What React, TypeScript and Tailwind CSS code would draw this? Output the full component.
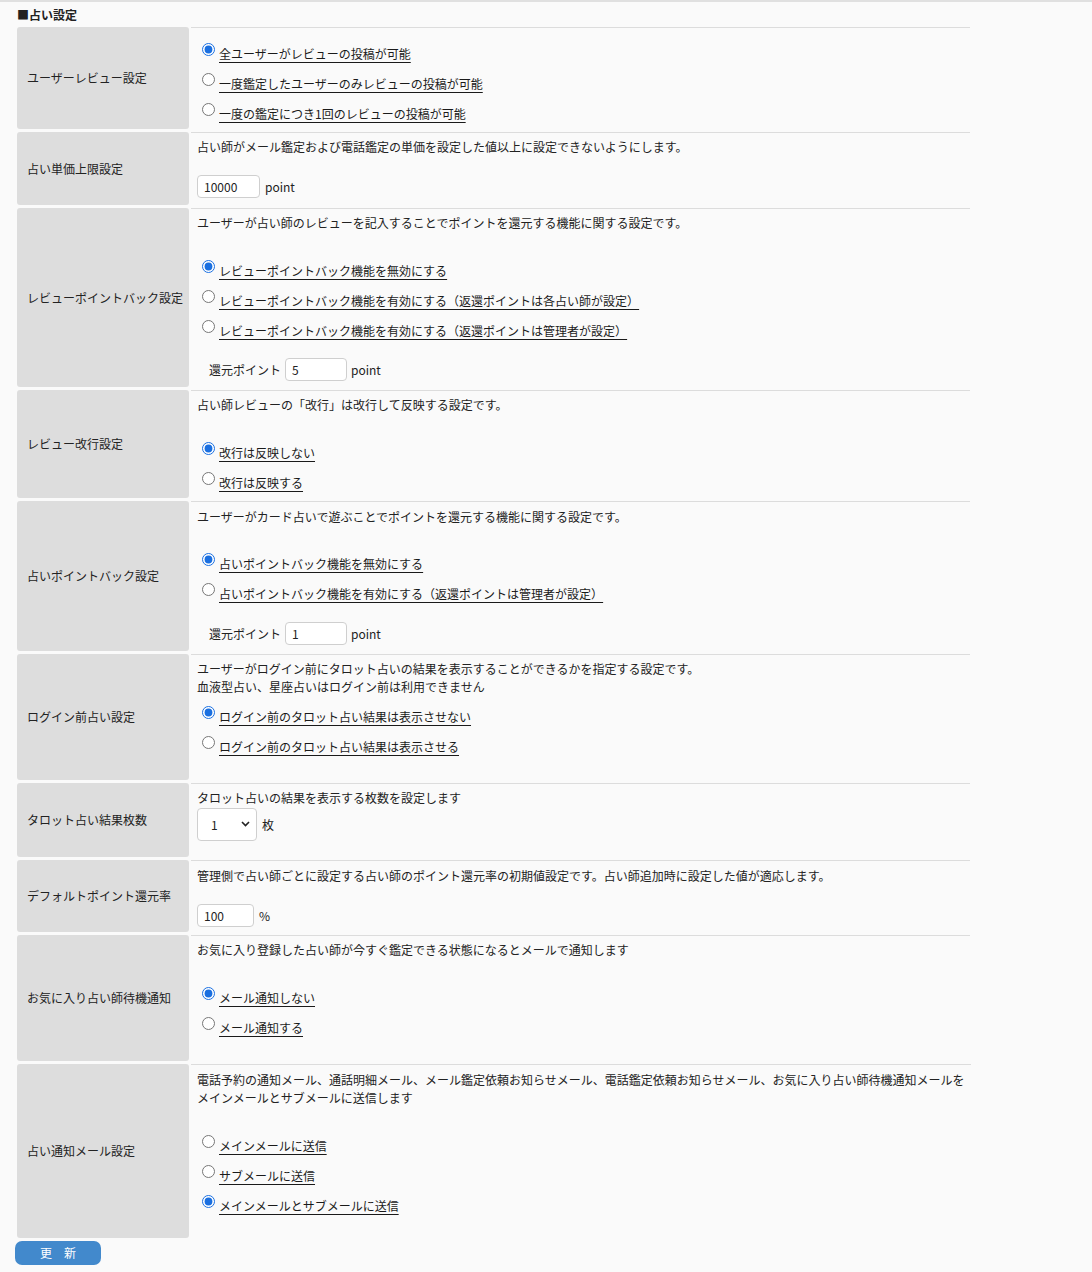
import { ReactNode } from "react";

const font = { fontFamily: '"Noto Sans CJK JP", "Noto Sans", sans-serif' };

function Radio({ label, checked }: { label: string; checked?: boolean }) {
  return (
    <label className="flex items-center h-[30px]">
      <input
        type="radio"
        defaultChecked={checked}
        className="ml-[5px] mb-[10px] w-[13px] h-[13px] m-0 accent-[#1a6fe0]"
      />
      <span className="ml-[4px] underline underline-offset-[3px] text-[#1a1a1a]">{label}</span>
    </label>
  );
}

function NumInput({ value, w = "w-[62px]" }: { value: string; w?: string }) {
  return (
    <input
      type="text"
      defaultValue={value}
      className={`${w} h-[23px] bg-white border border-[#cfcfcf] rounded-[4px] px-[6px] text-[12px] text-[#222] outline-none`}
    />
  );
}

function Row({ label, children }: { label: string; children: ReactNode }) {
  return (
    <div className="flex gap-[2px]">
      <div className="w-[172px] shrink-0 bg-[#dddddd] rounded-[3px] flex items-center pl-[10px] text-[#222]">
        {label}
      </div>
      <div className="flex-1 border-t border-[#dcdcdc] px-[6px]">{children}</div>
    </div>
  );
}

export default function App() {
  return (
    <div style={font} className="min-h-[1272px] bg-[#fafafa] text-[12px] leading-[18px] text-[#222] border-t-2 border-[#e0e0e0]">
      <div className="w-[953px] ml-[17px]">
        <div className="h-[25px] flex items-center font-bold">■占い設定</div>

        <div className="flex flex-col gap-[3px]">
          <Row label="ユーザーレビュー設定">
            <div className="pt-[11px]">
              <Radio label="全ユーザーがレビューの投稿が可能" checked />
              <Radio label="一度鑑定したユーザーのみレビューの投稿が可能" />
              <Radio label="一度の鑑定につき1回のレビューの投稿が可能" />
            </div>
          </Row>

          <Row label="占い単価上限設定">
            <div className="pt-[5px] pb-[7px]">
              <p>占い師がメール鑑定および電話鑑定の単価を設定した値以上に設定できないようにします。</p>
              <div className="flex items-center gap-[5px] mt-[19px]">
                <NumInput value="10000" w="w-[63px]" />
                <span>point</span>
              </div>
            </div>
          </Row>

          <Row label="レビューポイントバック設定">
            <div className="pt-[5px] pb-[6px]">
              <p>ユーザーが占い師のレビューを記入することでポイントを還元する機能に関する設定です。</p>
              <div className="mt-[24px]">
                <Radio label="レビューポイントバック機能を無効にする" checked />
                <Radio label="レビューポイントバック機能を有効にする（返還ポイントは各占い師が設定）" />
                <Radio label="レビューポイントバック機能を有効にする（返還ポイントは管理者が設定）" />
              </div>
              <div className="flex items-center gap-[4px] mt-[12px] pl-[12px]">
                <span>還元ポイント</span>
                <NumInput value="5" />
                <span>point</span>
              </div>
            </div>
          </Row>

          <Row label="レビュー改行設定">
            <div className="pt-[5px]">
              <p>占い師レビューの「改行」は改行して反映する設定です。</p>
              <div className="mt-[24px]">
                <Radio label="改行は反映しない" checked />
                <Radio label="改行は反映する" />
              </div>
            </div>
          </Row>

          <Row label="占いポイントバック設定">
            <div className="pt-[6px] pb-[6px]">
              <p>ユーザーがカード占いで遊ぶことでポイントを還元する機能に関する設定です。</p>
              <div className="mt-[23px]">
                <Radio label="占いポイントバック機能を無効にする" checked />
                <Radio label="占いポイントバック機能を有効にする（返還ポイントは管理者が設定）" />
              </div>
              <div className="flex items-center gap-[4px] mt-[13px] pl-[12px]">
                <span>還元ポイント</span>
                <NumInput value="1" />
                <span>point</span>
              </div>
            </div>
          </Row>

          <Row label="ログイン前占い設定">
            <div className="pt-[5px] pb-[18px]">
              <p>ユーザーがログイン前にタロット占いの結果を表示することができるかを指定する設定です。</p>
              <p>血液型占い、星座占いはログイン前は利用できません</p>
              <div className="mt-[6px]">
                <Radio label="ログイン前のタロット占い結果は表示させない" checked />
                <Radio label="ログイン前のタロット占い結果は表示させる" />
              </div>
            </div>
          </Row>

          <Row label="タロット占い結果枚数">
            <div className="pt-[5px] pb-[16px]">
              <p>タロット占いの結果を表示する枚数を設定します</p>
              <div className="flex items-center gap-[5px] mt-[1px]">
                <div className="relative w-[60px] h-[33px]">
                  <select className="appearance-none w-full h-full bg-white border border-[#cfcfcf] rounded-[4px] pl-[13px] text-[12px] text-[#222] outline-none">
                    <option>1</option>
                    <option>2</option>
                    <option>3</option>
                  </select>
                  <svg
                    className="absolute right-[7px] top-[13px] pointer-events-none"
                    width="9"
                    height="6"
                    viewBox="0 0 9 6"
                    fill="none"
                  >
                    <path d="M1 1l3.5 3.5L8 1" stroke="#222" strokeWidth="1.6" />
                  </svg>
                </div>
                <span>枚</span>
              </div>
            </div>
          </Row>

          <Row label="デフォルトポイント還元率">
            <div className="pt-[6px] pb-[5px]">
              <p>管理側で占い師ごとに設定する占い師のポイント還元率の初期値設定です。占い師追加時に設定した値が適応します。</p>
              <div className="flex items-center gap-[5px] mt-[19px]">
                <NumInput value="100" w="w-[57px]" />
                <span>%</span>
              </div>
            </div>
          </Row>

          <Row label="お気に入り占い師待機通知">
            <div className="pt-[5px] pb-[18px]">
              <p>お気に入り登録した占い師が今すぐ鑑定できる状態になるとメールで通知します</p>
              <div className="mt-[24px]">
                <Radio label="メール通知しない" checked />
                <Radio label="メール通知する" />
              </div>
            </div>
          </Row>

          <Row label="占い通知メール設定">
            <div className="pt-[6px] pb-[17px]">
              <p className="whitespace-nowrap">
                電話予約の通知メール、通話明細メール、メール鑑定依頼お知らせメール、電話鑑定依頼お知らせメール、お気に入り占い師待機通知メールを
              </p>
              <p>メインメールとサブメールに送信します</p>
              <div className="mt-[24px]">
                <Radio label="メインメールに送信" />
                <Radio label="サブメールに送信" />
                <Radio label="メインメールとサブメールに送信" checked />
              </div>
            </div>
          </Row>
        </div>

        <button
          type="button"
          className="mt-[3px] -ml-[2px] w-[86px] h-[24px] bg-[#4289cc] rounded-[7px] text-white text-[12px] flex items-center justify-center"
        >
          更　新
        </button>
      </div>
    </div>
  );
}
